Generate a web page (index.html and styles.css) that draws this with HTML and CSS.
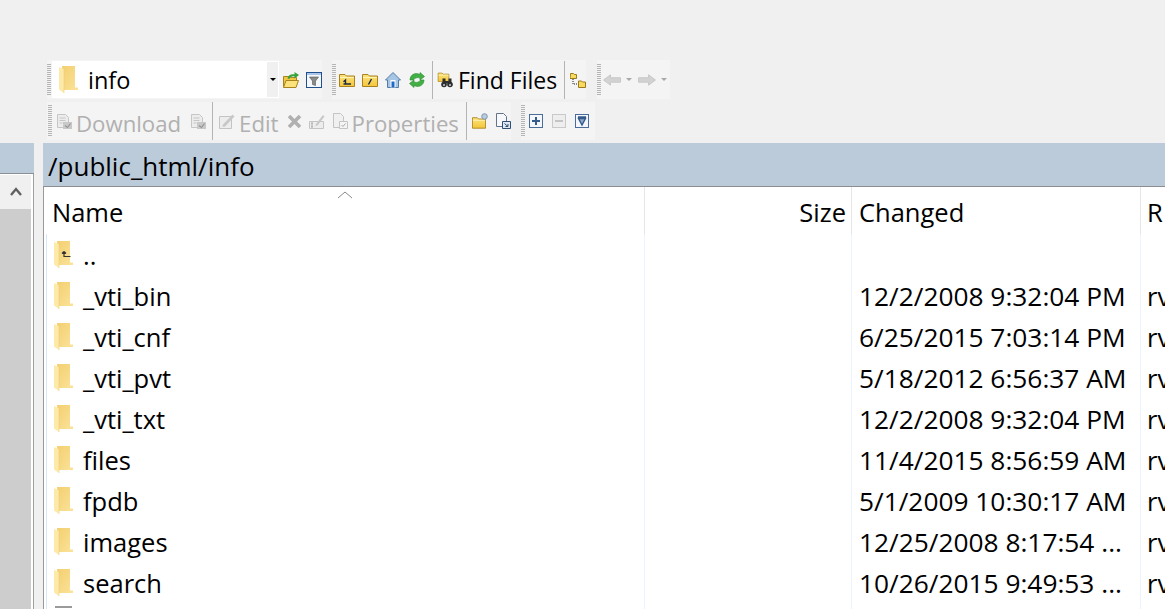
FILE: index.html
```html
<!DOCTYPE html>
<html lang="en">
<head>
<meta charset="utf-8">
<title>WinSCP</title>
<link rel="stylesheet" href="styles.css">
</head>
<body>
<svg class="defs" width="0" height="0" aria-hidden="true">
  <defs>
    <linearGradient id="fldgrad" x1="0" y1="0" x2="1" y2="1">
      <stop offset="0" stop-color="#f3cf70"/>
      <stop offset="1" stop-color="#fbe39a"/>
    </linearGradient>
    <linearGradient id="tbgrad" x1="0" y1="0" x2="0" y2="1">
      <stop offset="0" stop-color="#fbe47e"/>
      <stop offset="1" stop-color="#f4c63a"/>
    </linearGradient>
    <symbol id="bigfolder" viewBox="0 0 19 27">
      <path d="M3 0h13v21.500h3V24H5z" fill="url(#fldgrad)"/>
      <path d="M0 1l5 2.500V27l-5-3.500z" fill="#fdeaa9"/>
      <path d="M5 3.500V27" stroke="#efcf78" stroke-width=".6"/>
    </symbol>
    <symbol id="tbfolder" viewBox="0 0 16 14">
      <path d="M.5 1.500h5.500l1.500 1.500h8v10.500H.5z" fill="url(#tbgrad)" stroke="#a8821e"/>
      <path d="M1 4.500h14" stroke="#fff3b8"/>
    </symbol>
    <symbol id="doc" viewBox="0 0 17 17">
      <path d="M2.500 1.500h8l3 3v10h-11z" fill="#ececec" stroke="#c6c6c6"/>
      <path d="M4.500 5h6M4.500 7.500h6M4.500 10h3" stroke="#c6c6c6"/>
      <path d="M8 9h9v7H8z" fill="#c8c8c8"/>
      <path d="M10 12.500l2.500 2 3-4" fill="none" stroke="#969696" stroke-width="1.200"/>
    </symbol>
  </defs>
</svg>
<div class="top">
  <div class="tb tb1">
    <div class="group">
      <span class="grip"></span>
      <div class="combo">
        <svg class="combo-folder"><use href="#bigfolder"/></svg>
        <span class="combo-text">info</span>
        <span class="combo-arrow"><i></i></span>
      </div>
      <svg class="ic ic-a" viewBox="0 0 16 16"><path d="M.5 4.500h6l1 1h6v9h-13z" fill="#f2c641" stroke="#a8821e"/><path d="M.5 15.500l2.500-7h12.500l-2.500 7z" fill="#fbe27a" stroke="#a8821e"/><path d="M4.500 6.500C5 3 9 1.500 11.500 2.500V0l4.500 3-4.500 3.500V4.500C9 4 7 5 6.500 7z" fill="#36a33a"/></svg>
      <svg class="ic ic-b" viewBox="0 0 16 16"><rect x=".5" y=".5" width="15" height="15" fill="#f4f8fc" stroke="#1f4f8e"/><path d="M1 1h14v2H1z" fill="#a9c6e8"/><path d="M3.500 5h9L9.500 9v4.500l-3-1V9z" fill="#8a8a8a" stroke="#555" stroke-width=".6"/></svg>
    </div>
    <div class="group group-gap">
      <span class="grip"></span>
      <svg class="ic ic-c" viewBox="0 0 16 14"><use href="#tbfolder" width="16" height="14"/><path d="M4.500 11h7.500M6.500 11V7L4.500 8.800" fill="none" stroke="#1b2a44" stroke-width="1.400"/></svg>
      <svg class="ic ic-d" viewBox="0 0 16 14"><use href="#tbfolder" width="16" height="14"/><path d="M6.500 11.500l3-5.500" stroke="#1b2a44" stroke-width="1.400"/></svg>
      <svg class="ic ic-e" viewBox="0 0 16 16"><path d="M8 .5L.5 8h2v7.500h11V8h2z" fill="#a6c6e6" stroke="#557ba3"/><path d="M5.500 8h5v7.500h-5z" fill="#fff"/><path d="M6.500 9.500h3v6h-3z" fill="#2169c9"/></svg>
      <svg class="ic ic-f" viewBox="0 0 16 16"><path d="M1 8C1 3 6 0 11 2.500V.5l4.500 4L11 8V6C8 5 5.500 6 4.500 8z" fill="#43b045" stroke="#268a2c" stroke-width=".6"/><path d="M15 8c0 5-5 8-10 5.500v2L.5 11.500 5 8v2c3 1 5.500 0 6.500-2z" fill="#43b045" stroke="#268a2c" stroke-width=".6"/></svg>
      <span class="sep sep-find"></span>
      <svg class="ic ic-g" viewBox="0 0 16 16"><use href="#tbfolder" width="13" height="10"/><circle cx="7" cy="12.500" r="2.800" fill="#2e2e2e"/><circle cx="13" cy="12.500" r="2.800" fill="#2e2e2e"/><path d="M5.500 6.500h3v6h-3zM11.500 6.500h3v6h-3zM8 9h4v2.500H8z" fill="#2e2e2e"/><circle cx="7" cy="13" r="1" fill="#c9d5e2"/><circle cx="13" cy="13" r="1" fill="#c9d5e2"/></svg>
      <span class="tb-label label-find">Find Files</span>
      <span class="sep sep-tree"></span>
      <svg class="ic ic-h" viewBox="0 0 16 16"><path d="M.5 1.500h3l1 1h2v4h-6.500zM8.500 9h3l1 1h3v5.500h-7z" fill="#f9da60" stroke="#9a7a1c"/><path d="M3 7v5h5" fill="none" stroke="#222" stroke-dasharray="1 1"/></svg>
    </div>
    <div class="group group-nav">
      <span class="grip"></span>
      <svg class="ic ic-nav" viewBox="0 0 18 12"><path d="M.5 6L7.500.8v3h10v4.400h-10v3z" fill="#d2d2d2" stroke="#c8c8c8"/></svg>
      <span class="mini-arrow"></span>
      <svg class="ic ic-nav ic-next" viewBox="0 0 18 12"><path d="M17.500 6L10.500.8v3H.5v4.400h10v3z" fill="#d2d2d2" stroke="#c8c8c8"/></svg>
      <span class="mini-arrow"></span>
    </div>
  </div>
  <div class="tb tb2">
    <div class="group">
      <span class="grip"></span>
      <svg class="ic ic-dis ic-dl"><use href="#doc"/></svg>
      <span class="tb-label dim label-dl">Download</span>
      <svg class="ic ic-dis ic-dl2"><use href="#doc"/></svg>
      <span class="sep sep-edit"></span>
      <svg class="ic ic-edit" viewBox="0 0 17 17"><path d="M1.500 3.500h12v12h-12z" fill="#ededed" stroke="#c4c4c4"/><path d="M5 11.500L14.500 1.500 16.500 3.500 7 13.500 4.500 14z" fill="#c8c8c8"/></svg>
      <span class="tb-label dim label-edit">Edit</span>
      <svg class="ic ic-x" viewBox="0 0 15 15"><path d="M2 2l11 11M13 2L2 13" stroke="#b0b0b0" stroke-width="3.600"/></svg>
      <svg class="ic ic-ren" viewBox="0 0 16 16"><path d="M.5 8.500h14v7H.5z" fill="#ededed" stroke="#c4c4c4"/><path d="M7 11L14 2l1.500 1.500L8.500 12.500 6.500 13z" fill="#c8c8c8"/><path d="M3 10v4M2 10h2M2 14h2" stroke="#aaa"/></svg>
      <svg class="ic ic-prop" viewBox="0 0 16 16"><path d="M1.500 .5h7l3 3v11h-10z" fill="#f0f0f0" stroke="#c4c4c4"/><path d="M7.500 8.500h8v7h-8z" fill="#f4f4f4" stroke="#c4c4c4"/><path d="M9.500 12l1.500 1.500 2.500-3" fill="none" stroke="#aaa"/></svg>
      <span class="tb-label dim label-prop">Properties</span>
      <span class="sep sep-new"></span>
      <svg class="ic ic-new" viewBox="0 0 16 16"><use href="#tbfolder" width="14" height="13" y="3"/><circle cx="12.500" cy="3.500" r="2.800" fill="#b9cbdc" stroke="#7e97b0"/></svg>
      <svg class="ic ic-cp" viewBox="0 0 16 16"><path d="M1.500 .5h7l3 3v10h-10z" fill="#f6f8fb" stroke="#62748c"/><path d="M7.500 8.500h8v7h-8z" fill="#dfe8f2" stroke="#2f4f75"/><path d="M9.500 10.500l3.500 3M13 11v2.500h-2.500" fill="none" stroke="#2f4f75"/></svg>
    </div>
    <div class="group group-tree">
      <span class="grip"></span>
      <svg class="ic ic-sq ic-plus" viewBox="0 0 14 14"><rect x=".5" y=".5" width="13" height="13" fill="#f3f6fa" stroke="#4a6c98"/><path d="M3 7h8M7 3v8" stroke="#345a8c" stroke-width="2"/></svg>
      <svg class="ic ic-sq" viewBox="0 0 14 14"><rect x=".5" y=".5" width="13" height="13" fill="#eee" stroke="#c9c9c9"/><path d="M3 7h8" stroke="#c4c4c4" stroke-width="2"/></svg>
      <svg class="ic ic-sq" viewBox="0 0 14 14"><rect x=".5" y=".5" width="13" height="13" fill="#f3f6fa" stroke="#4a6c98"/><path d="M3 3h8M3.500 4.500h7L7 11z" fill="#8fa9c8" stroke="#345a8c" stroke-width="1.400"/></svg>
    </div>
  </div>
</div>
<div class="panes">
  <div class="left-pane">
    <div class="left-title"></div>
    <div class="left-body">
      <div class="scroll-btn">
        <svg class="scroll-chev" viewBox="0 0 12 9"><path d="M1 8l5-6 5 6" fill="none" stroke="#606060" stroke-width="2.400"/></svg>
      </div>
      <div class="scroll-thumb"></div>
    </div>
  </div>
  <div class="splitter"></div>
  <div class="right-pane">
    <div class="path-bar">/public_html/info</div>
    <div class="list">
      <div class="row head">
        <div class="c name">Name<svg class="sort" viewBox="0 0 16 8"><path d="M1 7l7-6 7 6" fill="none" stroke="#8a8a8a"/></svg></div>
        <div class="c size">Size</div>
        <div class="c changed">Changed</div>
        <div class="c rights">R</div>
      </div>
      <div class="row"><div class="c name"><svg class="fld" viewBox="0 0 19 27"><use href="#bigfolder" width="19" height="27"/><path d="M10 10.500v5h6.500M10 10.500l-2 2M10 10.500l2 2" fill="none" stroke="#333" stroke-width="1.200"/></svg><span>..</span></div><div class="c size"></div><div class="c changed"></div><div class="c rights"></div></div>
      <div class="row"><div class="c name"><svg class="fld"><use href="#bigfolder"/></svg><span>_vti_bin</span></div><div class="c size"></div><div class="c changed">12/2/2008 9:32:04 PM</div><div class="c rights">rv</div></div>
      <div class="row"><div class="c name"><svg class="fld"><use href="#bigfolder"/></svg><span>_vti_cnf</span></div><div class="c size"></div><div class="c changed">6/25/2015 7:03:14 PM</div><div class="c rights">rv</div></div>
      <div class="row"><div class="c name"><svg class="fld"><use href="#bigfolder"/></svg><span>_vti_pvt</span></div><div class="c size"></div><div class="c changed">5/18/2012 6:56:37 AM</div><div class="c rights">rv</div></div>
      <div class="row"><div class="c name"><svg class="fld"><use href="#bigfolder"/></svg><span>_vti_txt</span></div><div class="c size"></div><div class="c changed">12/2/2008 9:32:04 PM</div><div class="c rights">rv</div></div>
      <div class="row"><div class="c name"><svg class="fld"><use href="#bigfolder"/></svg><span>files</span></div><div class="c size"></div><div class="c changed">11/4/2015 8:56:59 AM</div><div class="c rights">rv</div></div>
      <div class="row"><div class="c name"><svg class="fld"><use href="#bigfolder"/></svg><span>fpdb</span></div><div class="c size"></div><div class="c changed">5/1/2009 10:30:17 AM</div><div class="c rights">rv</div></div>
      <div class="row"><div class="c name"><svg class="fld"><use href="#bigfolder"/></svg><span>images</span></div><div class="c size"></div><div class="c changed">12/25/2008 8:17:54 ...</div><div class="c rights">rv</div></div>
      <div class="row"><div class="c name"><svg class="fld"><use href="#bigfolder"/></svg><span>search</span></div><div class="c size"></div><div class="c changed">10/26/2015 9:49:53 ...</div><div class="c rights">rv</div></div>
      <div class="row"><div class="c name"><svg class="fld fld-file" viewBox="0 0 17 36"><path d="M0 .5h17" stroke="#9a9a9a" stroke-width="3"/></svg></div><div class="c size"></div><div class="c changed"></div><div class="c rights"></div></div>
    </div>
  </div>
</div>
</body>
</html>
```
FILE: styles.css
```css
* { box-sizing: border-box; }
html, body { margin: 0; height: 100%; overflow: hidden; }
body { background: #f0f0f0; font-family: "Open Sans", "Noto Sans", sans-serif; font-size: 25.500px; color: #000; width: 1165px; height: 609px; }
.defs { position: absolute; }
.top { height: 143px; padding: 60px 0 0 47px; }
.tb { display: flex; align-items: center; font-size: 23px; }
.tb1 { height: 39px; }
.tb2 { height: 44px; }
.group { display: flex; align-items: center; height: 100%; background: #f4f4f4; }
.tb2 .group { height: 38px; }
.group-gap { margin-left: 10px; }
.grip { width: 4px; height: 32px; flex: none; background: repeating-linear-gradient(#b5b5b5 0 1px, transparent 1px 2px); }
.tb2 .group:first-child .grip { margin-left: 1px; }
.combo { display: flex; align-items: center; width: 227px; height: 37px; margin-left: 1px; background: #fff; }
.combo-folder { width: 19px; height: 27px; margin-left: 7px; flex: none; }
.combo-text { margin-left: 10px; font-size: 23.500px; }
.combo-arrow { margin-left: auto; margin-right: 1px; width: 11px; height: 35px; background: #f0f0f0; display: flex; align-items: center; justify-content: center; }
.combo-arrow i { border: 3px solid transparent; border-top: 3px solid #000; border-bottom: 0; }
.ic { width: 16px; height: 16px; flex: none; }
.ic-a { margin-left: 4px; }
.ic-b { margin-left: 7px; }
.ic-c { margin-left: 3px; }
.ic-d { margin-left: 7px; }
.ic-e { margin-left: 7px; }
.ic-f { margin-left: 8px; }
.sep { width: 1px; height: 38px; background: #b4b4b4; flex: none; }
.sep-find { margin-left: 7px; }
.ic-g { margin-left: 4px; }
.tb-label { white-space: nowrap; }
.label-find { margin-left: 5px; }
.sep-tree { margin-left: 7px; }
.ic-h { margin-left: 5px; }
.group-nav { margin-left: 11px; padding-right: 3px; }
.ic-nav { width: 18px; height: 12px; margin-left: 2px; }
.ic-next { margin-left: 6px; }
.mini-arrow { border: 3px solid transparent; border-top: 3px solid #a8a8a8; border-bottom: 0; margin-left: 5px; }
.tb2 .tb-label { font-size: 22.200px; margin-top: 5px; }
.dim { color: #b0b0b0; }
.ic-dl { width: 17px; height: 17px; margin-left: 3px; }
.label-dl { margin-left: 4px; }
.ic-dl2 { width: 17px; height: 17px; margin-left: 8px; }
.sep-edit { margin-left: 6px; }
.ic-edit { width: 17px; height: 17px; margin-left: 5px; }
.label-edit { margin-left: 4px; }
.ic-x { width: 15px; height: 15px; margin-left: 8px; }
.ic-ren { margin-left: 7px; }
.ic-prop { margin-left: 7px; }
.label-prop { margin-left: 4px; }
.sep-new { margin-left: 7px; }
.ic-new { margin-left: 5px; }
.ic-cp { margin-left: 7px; }
.group-tree { margin-left: 10px; padding-right: 6px; }
.ic-sq { width: 14px; height: 14px; margin-left: 9px; }
.ic-plus { margin-left: 4px; }
.panes { display: flex; height: 466px; }
.left-pane { width: 34px; display: flex; flex-direction: column; }
.left-title { height: 44px; background: #bccbda; border-bottom: 1px solid #8b8f94; }
.left-body { flex: 1; background: #fff; border-right: 1px solid #a0a0a0; padding: 1px 2px 0 0; }
.scroll-btn { height: 34px; background: #f0f0f0; display: flex; align-items: center; justify-content: center; }
.scroll-chev { width: 12px; height: 9px; margin-top: -2px; }
.scroll-thumb { height: 400px; background: #cdcdcd; }
.splitter { width: 9px; background: #f0f0f0; flex: none; }
.right-pane { flex: 1; display: flex; flex-direction: column; min-width: 0; }
.path-bar { height: 44px; background: #bccbda; border-bottom: 1px solid #8b8f94; padding-left: 5px; line-height: 47px; white-space: nowrap; font-size: 26px; }
.list { flex: 1; background: #fff; overflow: hidden; border-left: 1px solid #9a9a9a; }
.row { display: flex; height: 41px; flex: none; }
.head { height: 47px; }
.c { height: 100%; white-space: nowrap; overflow: hidden; border-right: 1px solid #eef4fd; flex: none; }
.head .c { height: 47px; border-right-color: #e6e6e6; line-height: 50px; position: relative; }
.name { width: 601px; padding-left: 8px; display: flex; align-items: center; line-height: 42px; }
.head .name { display: block; }
.row:not(.head) .name { width: 599px; margin-left: 2px; border-left: 1px solid #d5e5fb; padding-left: 7px; }
.fld { width: 19px; height: 27px; flex: none; }
.name span { margin-left: 10px; }
.size { width: 207px; text-align: right; padding-right: 5px; }
.changed { width: 289px; padding-left: 7px; line-height: 42px; }
.row:not(.head) .changed { font-size: 26.300px; }
.rights { flex: 1; padding-left: 6px; line-height: 42px; border-right: 0; }
.sort { position: absolute; left: 293px; top: 4px; width: 16px; height: 8px; }
.fld-file { height: 36px; }
```
